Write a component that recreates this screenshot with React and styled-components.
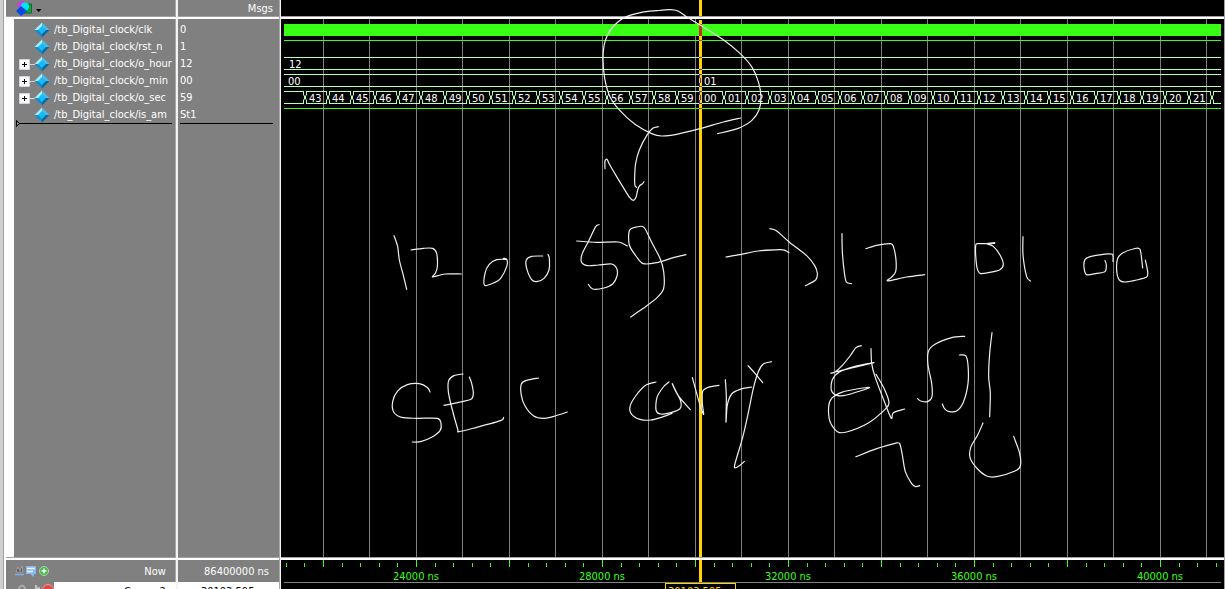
import React from "react";
import styled, { createGlobalStyle } from "styled-components";

const Global = createGlobalStyle`
  * { box-sizing: border-box; }
  html, body { margin: 0; background: #000; overflow: hidden; }
  body { font: 11px/17px "DejaVu Sans Condensed", "Noto Sans", sans-serif; color: #fff; }
  button { appearance: none; border: 0; padding: 0; background: none; color: inherit; font: inherit; }
`;

const Window = styled.main`
  display: grid;
  grid-template-columns: 6px 169px 3px 101px 2px minmax(0, 1fr) 1px;
  height: 100vh;
  overflow: hidden;
`;

const Edge = styled.div`
  background: #d0d0d0;
  border-right: ${(p) => (p.$thin ? "0" : "2px solid #fff")};
  box-shadow: inset -1px 0 #a0a0a0;
`;

const Sash = styled.div`
  background: #f4f4f4;
  border-left: 1px solid #a8a8a8;
`;

const Pane = styled.section`
  position: relative;
  display: grid;
  grid-template-rows: 19px minmax(0, 1fr) 32px;
  min-width: 0;
  background: ${(p) => (p.$dark ? "#000" : "#808080")};
`;

const Header = styled.header`
  display: flex;
  align-items: center;
  justify-content: ${(p) => (p.$end ? "flex-end" : "flex-start")};
  padding: 0 6px 0 8px;
  border-bottom: 2px solid #fff;
  box-shadow: inset 0 -1px #a0a0a0;
`;

const WaveHeader = styled(Header)`
  padding: 0 0 1px;
`;

const Footer = styled.footer`
  height: 52px;
  padding-top: 2px;
  border-top: 1px solid #a0a0a0;
  box-shadow: inset 0 2px #fff;
`;

const NameBody = styled.div`
  border-left: 8px solid #fff;
  padding: 2px 4px 0 0;
`;

const ValueBody = styled.div`
  padding: 2px 6px 0 2px;
`;

const List = styled.ul`
  list-style: none;
  margin: 0;
  padding: 0;
`;

const SignalRow = styled.li`
  display: grid;
  grid-template-columns: 20px 20px 1fr;
  align-items: center;
  height: 17px;
  white-space: nowrap;
`;

const ValueRow = styled.li`
  height: 17px;
`;

const Expander = styled.button`
  display: block;
  height: 17px;
  padding-left: 5px;
  svg { display: block; overflow: visible; }
`;

const InsertLine = styled.div`
  height: 1px;
  margin-left: ${(p) => (p.$marker ? "3px" : "0")};
  background: #000;
  svg { display: block; position: relative; top: -3px; left: -1px; }
`;

const MenuButton = styled.button`
  display: block;
  height: 17px;
  svg { display: block; }
`;

const FootRow = styled.div`
  display: flex;
  align-items: center;
  justify-content: ${(p) => (p.$end ? "flex-end" : "space-between")};
  height: 22px;
  padding: 0 10px 0 8px;
`;

const CursorRow = styled(FootRow)`
  padding: 0;
  align-items: stretch;
`;

const CursorIcons = styled.div`
  width: 48px;
  padding: 2px 0 0 10px;
  svg { display: block; }
`;

const CursorText = styled.div`
  flex: 1;
  padding: 1px 10px 0 0;
  background: #fff;
  color: #000;
  text-align: right;
`;

const Chart = styled.svg`
  display: block;
  width: 100%;
  height: 100%;
  min-width: 0;
  overflow: hidden;
`;

const Track = styled.rect`
  width: calc(100% - 6px);
`;

const Notes = styled.svg`
  position: absolute;
  inset: 0;
  width: 100%;
  height: 100%;
  pointer-events: none;
`;

const Plot = styled.div`
  min-height: 0;
  overflow: hidden;
`;

const SIGNALS = [
  { name: "clk", value: "0" },
  { name: "rst_n", value: "1" },
  { name: "o_hour", value: "12", bus: true },
  { name: "o_min", value: "00", bus: true },
  { name: "o_sec", value: "59", bus: true },
  { name: "is_am", value: "St1" },
];

const GREEN = "#39ff14";
const PALE = "#b4ffb4";
const YELLOW = "#ffd400";
const CURSOR = 418;
const CURSOR_BLUE = "#5030c0";
const LOGIC_LINES = [21, 89];
const BUS_LINES = [38, 50, 55, 67, 72, 84];

const range = (n) => Array.from({ length: n }, (_, i) => i);

function Diamond() {
  return (
    <svg width="16" height="16" viewBox="0 0 16 16" aria-hidden="true">
      <path d="M8 0.500L15.500 8H8z" fill="#4fb9e4" />
      <path d="M8 0.500L0.500 8H8z" fill="#a8ecff" />
      <path d="M0.500 8L8 15.500V8z" fill="#158cca" />
      <path d="M15.500 8L8 15.500V8z" fill="#0a689f" />
      <path d="M8 4L12 8L8 12L4 8z" fill="#10bcfa" />
    </svg>
  );
}

function PlusBox() {
  return (
    <svg width="15" height="17" viewBox="0 0 15 17" aria-hidden="true">
      <rect x="0" y="4" width="11" height="11" rx="1" fill="#d4d4dc" />
      <rect x="1" y="5" width="9" height="9" fill="#fafafc" />
      <path d="M3 9.500H8M5.500 7V12" stroke="#000" />
      <path d="M11 9.500H16" stroke="#d8d8d8" />
    </svg>
  );
}

function MenuIcon() {
  return (
    <svg width="30" height="17" viewBox="0 0 30 17" aria-hidden="true">
      <path d="M2 5L8 0L12 4L7 8z" fill="#c63ce0" />
      <path d="M11 4H17.500V13H10z" fill="#17a03a" stroke="#0c6d28" />
      <circle cx="11" cy="6.500" r="4" fill="#00e4f4" />
      <path d="M7 6L13 11L7 16L2 11z" fill="#0a46e6" />
      <path d="M22 9H27.500L24.750 12z" fill="#000" />
    </svg>
  );
}

function NowIcons() {
  return (
    <svg width="36" height="14" viewBox="0 0 36 14" aria-hidden="true">
      <path d="M2 8L4 3L6 7L8 2L9 8z" fill="#505050" stroke="#a0a0a0" />
      <path d="M1 10.500H10" stroke="#7ab2ea" strokeWidth="1.500" />
      <path d="M12 2H22V10H20L20 13L16 10H12z" fill="#8ab8ee" />
      <path d="M13 4.500H21M13 7.500H19" stroke="#eef6ff" strokeWidth="1.500" />
      <circle cx="30" cy="7" r="4.500" fill="#45b54a" stroke="#a5dca0" />
      <path d="M27.500 7H32.500M30 4.500V9.500" stroke="#fff" strokeWidth="1.500" />
    </svg>
  );
}

function CursorToolIcons() {
  return (
    <svg width="38" height="14" viewBox="0 0 38 14" aria-hidden="true">
      <path d="M3 9V4Q6 -1 9 4V9" fill="none" stroke="#aaa" strokeWidth="2" />
      <path d="M16 10L22 4M20 1V5L24 4" fill="none" stroke="#c4c4c4" strokeWidth="2" />
      <circle cx="32" cy="6" r="5.500" fill="#e04a40" stroke="#f49a92" />
      <path d="M29 6H35" stroke="#fff" strokeWidth="2" />
    </svg>
  );
}

function Crossing({ x, y }) {
  return (
    <>
      <rect x={x - 1} y={y - 1} width="3" height="15" fill="#000" />
      <path
        d={`M${x - 0.5} ${y}V${y + 4}L${x + 0.5} ${y + 5}V${y + 8}L${x - 0.5} ${y + 9}V${y + 13}M${x + 2.5} ${y}V${y + 4}L${x + 1.5} ${y + 5}V${y + 8}L${x + 2.5} ${y + 9}V${y + 13}`}
        fill="none"
        stroke={PALE}
      />
    </>
  );
}

function Waves() {
  const edge = (i) => Math.floor(23.5 + i * 23.25);
  return (
    <Chart>
      {range(20).map((i) => (
        <rect key={i} x={Math.floor(42 + i * 46.5)} y="0" width="1" height="100%" fill="#808080" />
      ))}
      <Track x="3" y="5" height="12" fill={GREEN} />
      {LOGIC_LINES.map((y) => (
        <Track key={y} x="3" y={y} height="1" fill={GREEN} />
      ))}
      {BUS_LINES.map((y) => (
        <Track key={y} x="3" y={y} height="1" fill={PALE} />
      ))}
      {range(40).map((i) => (i === 17 ? null : <Crossing key={i} x={edge(i)} y={72} />))}
      <rect x={CURSOR} y="1" width="3" height="100%" fill={YELLOW} />
      <rect x={CURSOR} y="5" width="3" height="12" fill="#d02818" />
      {LOGIC_LINES.map((y) => (
        <rect key={y} x={CURSOR} y={y} width="3" height="1" fill="#d02818" />
      ))}
      {BUS_LINES.map((y) => (
        <rect key={y} x={CURSOR} y={y} width="3" height="1" fill={CURSOR_BLUE} />
      ))}
      {[55, 72].map((y) => (
        <path
          key={y}
          d={`M418.500 ${y}V${y + 4}M419.500 ${y + 4}V${y + 9}M418.500 ${y + 9}V${y + 13}`}
          stroke={CURSOR_BLUE}
        />
      ))}
      <g fill="#fff" fontSize="11">
        <text x="8" y="49">12</text>
        <text x="7" y="66">00</text>
        <text x="423" y="66">01</text>
        {range(39).map((i) => (
          <text key={i} x={edge(i) + 5} y="83">
            {String((43 + i) % 60).padStart(2, "0")}
          </text>
        ))}
      </g>
    </Chart>
  );
}

function Ruler() {
  return (
    <Chart>
      {range(51).map((i) => {
        const major = (i - 2) % 5 === 0;
        return (
          <rect
            key={i}
            x={Math.round(42 + (i - 2) * 18.6)}
            y={major ? 0 : 3}
            width="1"
            height={major ? 7 : 4}
            fill={GREEN}
          />
        );
      })}
      <g fill={GREEN} fontSize="11" textAnchor="middle">
        {range(5).map((i) => (
          <text key={i} x={135 + i * 186} y="20">
            {`${24000 + i * 4000} ns`}
          </text>
        ))}
      </g>
      <Track x="3" y="22" height="1" fill="#808080" />
      <rect x={CURSOR} y="0" width="3" height="22" fill={YELLOW} />
      <rect x="384.500" y="23.500" width="70" height="20" fill="#000" stroke={YELLOW} />
      <text x="387" y="35" fill={YELLOW} fontSize="11">30103.595 ns</text>
    </Chart>
  );
}

/* Freehand strokes, each group in thirds of a pixel from its own origin. */
const INK = [
  {
    origin: [309, 0],
    strokes: [
      [452,354, 400,366, 330,386, 260,403, 215,408, 185,401, 135,373, 90,332, 60,290, 44,235, 39,175, 45,125, 65,85, 105,52, 155,37, 200,32, 240,29, 264,33, 292,52, 330,75, 400,119, 450,160, 485,200, 505,245, 513,290, 507,330, 485,362, 445,385, 383,401],
      [205,380, 188,385, 170,407, 148,450, 137,490, 134,530, 135,557, 140,562],
      [45,506, 45,483, 51,478, 58,492, 80,530, 102,566, 120,594, 130,601, 138,592, 143,570, 149,557, 158,551, 162,545],
    ],
  },
  {
    origin: [99, 210],
    strokes: [
      [42,77, 53,110, 58,150, 70,196, 80,238],
      [93,120, 130,115, 158,115, 170,130, 172,170, 166,190, 158,201, 195,192, 244,192],
      [380,148, 350,149, 327,164, 315,190, 314,226, 345,217, 362,205, 380,170, 381,149, 370,145],
      [488,138, 455,139, 439,150, 440,175, 455,209, 470,215, 492,205, 507,180, 508,145, 504,133],
      [657,44, 647,50, 625,95, 607,130, 604,155, 622,167, 655,165, 695,162, 710,175, 711,198, 698,222, 672,234, 638,237, 625,223],
      [590,93, 650,97, 715,96, 742,108],
      [918,134, 880,143, 830,158, 790,161, 768,138, 748,105, 748,62, 770,51, 792,52, 815,97, 840,145, 851,185, 851,235, 832,262, 790,295, 752,321],
      [150,546, 143,533, 118,521, 82,524, 52,544, 38,575, 41,606, 65,622, 110,625, 172,625, 183,640, 180,662, 155,682, 122,695, 97,696],
      [192,586, 235,577, 273,568, 280,550, 275,520, 268,501],
      [249,492, 222,497, 206,512, 205,545, 214,588, 233,657, 237,665, 290,652, 362,632, 371,622],
      [476,504, 440,511, 424,522, 424,556, 435,588, 460,617, 490,625, 525,618, 562,606],
      [828,516, 797,526, 767,558, 750,590, 755,613, 780,628, 812,630, 850,620, 876,610],
      [867,516, 850,531, 831,562, 828,600, 842,612, 875,607, 900,596, 902,573, 885,540, 877,521, 897,560, 931,599],
    ],
  },
  {
    origin: [339, 210],
    strokes: [
      [318,141, 360,134, 415,123, 480,119, 495,121, 507,128],
      [450,56, 469,62, 510,98, 560,137, 584,167, 592,190, 587,210, 556,227],
      [666,71, 667,125, 673,188, 679,216, 694,221],
      [738,116, 770,106, 812,101, 821,112, 828,150, 827,185, 814,202, 803,213, 860,201, 914,194],
      [217,503, 230,550, 243,595, 251,613, 247,580, 248,544, 265,532, 297,526],
      [316,509, 319,560, 318,636, 322,585, 335,552, 360,538, 395,531],
      [384,467, 405,490, 428,518],
      [454,455, 430,462, 415,485, 400,535, 382,622, 367,686, 344,765, 348,773, 360,766, 373,754],
    ],
  },
  {
    origin: [539, 210],
    strokes: [
      [524,100, 499,101, 471,101, 467,108, 467,135, 471,173, 480,190, 505,188, 540,179, 550,163, 540,135, 520,109, 500,101, 524,98],
      [609,80, 609,135, 620,200, 631,213],
      [879,154, 877,133, 850,133, 810,140, 795,149, 792,172, 800,194, 830,190, 855,185, 859,165, 855,152],
      [968,174, 960,118, 940,117, 908,129, 893,145, 890,180, 897,209, 915,216, 950,210, 980,201, 983,185, 976,150],
      [124,407, 108,413, 90,438, 67,466, 45,486, 34,489, 90,475, 162,458, 105,469, 58,486, 37,509, 34,540, 50,556, 80,555, 148,533, 110,537, 65,547, 35,565, 26,590, 30,635, 52,665, 80,666, 145,639, 195,598, 207,578, 192,535, 168,493],
      [153,416, 155,460, 165,500, 195,580, 214,625, 220,608, 254,597],
      [434,379, 395,383, 345,403, 325,425, 324,465, 335,520, 336,560, 323,575, 302,573, 293,566],
      [418,435, 437,437, 444,465, 444,520, 430,577, 410,603, 385,604, 373,595, 367,582],
      [516,368, 509,430, 506,500, 511,550, 509,620],
      [489,639, 473,675, 453,710, 450,742, 470,774, 500,798, 530,800, 585,783, 601,768, 599,730, 581,679],
      [108,740, 170,716, 225,700, 239,701, 247,735, 256,785, 275,821, 287,830, 299,827],
    ],
  },
];

/* Smooth curve through a flat list of x, y pairs. */
function smooth(flat) {
  const p = range(flat.length / 2).map((i) => [flat[2 * i], flat[2 * i + 1]]);
  let d = `M${p[0]}`;
  for (let i = 0; i < p.length - 1; i += 1) {
    const a = p[i - 1] || p[i];
    const b = p[i];
    const c = p[i + 1];
    const e = p[i + 2] || c;
    const k = 7;
    d += `C${b[0] + (c[0] - a[0]) / k},${b[1] + (c[1] - a[1]) / k} ${c[0] - (e[0] - b[0]) / k},${c[1] - (e[1] - b[1]) / k} ${c[0]},${c[1]}`;
  }
  return d;
}

function Handwriting() {
  return (
    <Notes role="img" aria-label="12 00 59 → 12 01 00, sec carry">
      {INK.map(({ origin, strokes }) => (
        <g
          key={origin.join()}
          transform={`translate(${origin.join(" ")}) scale(0.33333)`}
          fill="none"
          stroke="#f0f0f0"
          strokeWidth="3.600"
          strokeLinecap="round"
          strokeLinejoin="round"
        >
          {strokes.map((s, i) => (
            <path key={i} d={smooth(s)} />
          ))}
        </g>
      ))}
    </Notes>
  );
}

export default function App() {
  return (
    <>
      <Global />
      <Window>
        <Edge />
        <Pane>
          <Header>
            <MenuButton aria-label="Wave menu"><MenuIcon /></MenuButton>
          </Header>
          <NameBody>
            <List>
              {SIGNALS.map((s) => (
                <SignalRow key={s.name}>
                  {s.bus ? <Expander aria-label={`Expand ${s.name}`}><PlusBox /></Expander> : <span />}
                  <Diamond />
                  <span>/tb_Digital_clock/{s.name}</span>
                </SignalRow>
              ))}
            </List>
            <InsertLine $marker>
              <svg width="4" height="7" viewBox="0 0 4 7" aria-hidden="true">
                <path d="M0.500 0.500V6.500L3.500 3.500z" fill="#808080" stroke="#000" />
              </svg>
            </InsertLine>
          </NameBody>
          <Footer>
            <FootRow>
              <NowIcons />
              <span>Now</span>
            </FootRow>
            <CursorRow>
              <CursorIcons><CursorToolIcons /></CursorIcons>
              <CursorText>Cursor 2</CursorText>
            </CursorRow>
          </Footer>
        </Pane>
        <Sash />
        <Pane>
          <Header $end>Msgs</Header>
          <ValueBody>
            <List>
              {SIGNALS.map((s) => (
                <ValueRow key={s.name}>{s.value}</ValueRow>
              ))}
            </List>
            <InsertLine />
          </ValueBody>
          <Footer>
            <FootRow $end>86400000 ns</FootRow>
            <CursorRow>
              <CursorText>30103.595 ns</CursorText>
            </CursorRow>
          </Footer>
        </Pane>
        <Sash />
        <Pane $dark>
          <WaveHeader>
            <Chart>
              <rect x={CURSOR} y="0" width="3" height="100%" fill={YELLOW} />
            </Chart>
          </WaveHeader>
          <Plot><Waves /></Plot>
          <Footer><Ruler /></Footer>
          <Handwriting />
        </Pane>
        <Edge $thin />
      </Window>
    </>
  );
}
